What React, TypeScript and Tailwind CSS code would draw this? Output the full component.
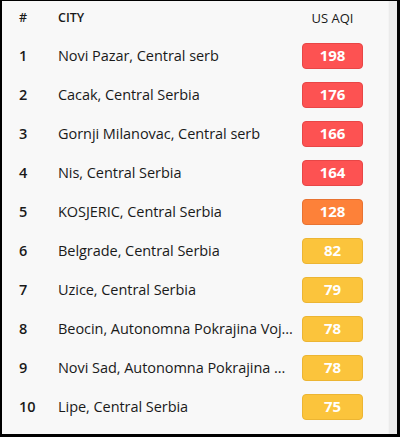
const rows = [
  { rank: 1, city: 'Novi Pazar, Central serb', aqi: 198 },
  { rank: 2, city: 'Cacak, Central Serbia', aqi: 176 },
  { rank: 3, city: 'Gornji Milanovac, Central serb', aqi: 166 },
  { rank: 4, city: 'Nis, Central Serbia', aqi: 164 },
  { rank: 5, city: 'KOSJERIC, Central Serbia', aqi: 128 },
  { rank: 6, city: 'Belgrade, Central Serbia', aqi: 82 },
  { rank: 7, city: 'Uzice, Central Serbia', aqi: 79 },
  { rank: 8, city: 'Beocin, Autonomna Pokrajina Voj...', aqi: 78 },
  { rank: 9, city: 'Novi Sad, Autonomna Pokrajina ...', aqi: 78 },
  { rank: 10, city: 'Lipe, Central Serbia', aqi: 75 },
];

function badgeClass(aqi: number) {
  if (aqi > 150) return 'bg-[#fd5252] border-[#e84646]';
  if (aqi > 100) return 'bg-[#fd8139] border-[#e87332]';
  return 'bg-[#fbc43c] border-[#ecb533]';
}

export default function App() {
  return (
    <div
      className="w-[400px] h-[437px] flex bg-[#f8f8f8] border-black border-t border-l-2 border-r-[3px] border-b-[3px] text-[#1a1a1a]"
      style={{ fontFamily: '"Open Sans", "Noto Sans", sans-serif' }}
    >
      <div className="flex-1 flex flex-col pl-[17px]">
        <div className="h-[35px] flex items-center text-[12.5px] font-semibold">
          <div className="w-[39px]">#</div>
          <div className="w-[238px]">CITY</div>
          <div className="ml-[6px] w-[61px] text-center text-[13px] font-medium">US AQI</div>
        </div>
        {rows.map((r) => (
          <div key={r.rank} className="h-[39px] flex items-center text-[14.5px]">
            <div className="w-[39px] font-semibold">{r.rank}</div>
            <div className="w-[238px] truncate tracking-[-0.05px]">{r.city}</div>
            <div
              className={`ml-[6px] w-[61px] h-[26px] rounded-[4px] border flex items-center justify-center text-white text-[15px] font-bold ${badgeClass(r.aqi)}`}
            >
              {r.aqi}
            </div>
          </div>
        ))}
      </div>
      <div className="w-[9px] bg-[#ebebeb] border-l border-[#f4f4f4]" />
    </div>
  );
}
